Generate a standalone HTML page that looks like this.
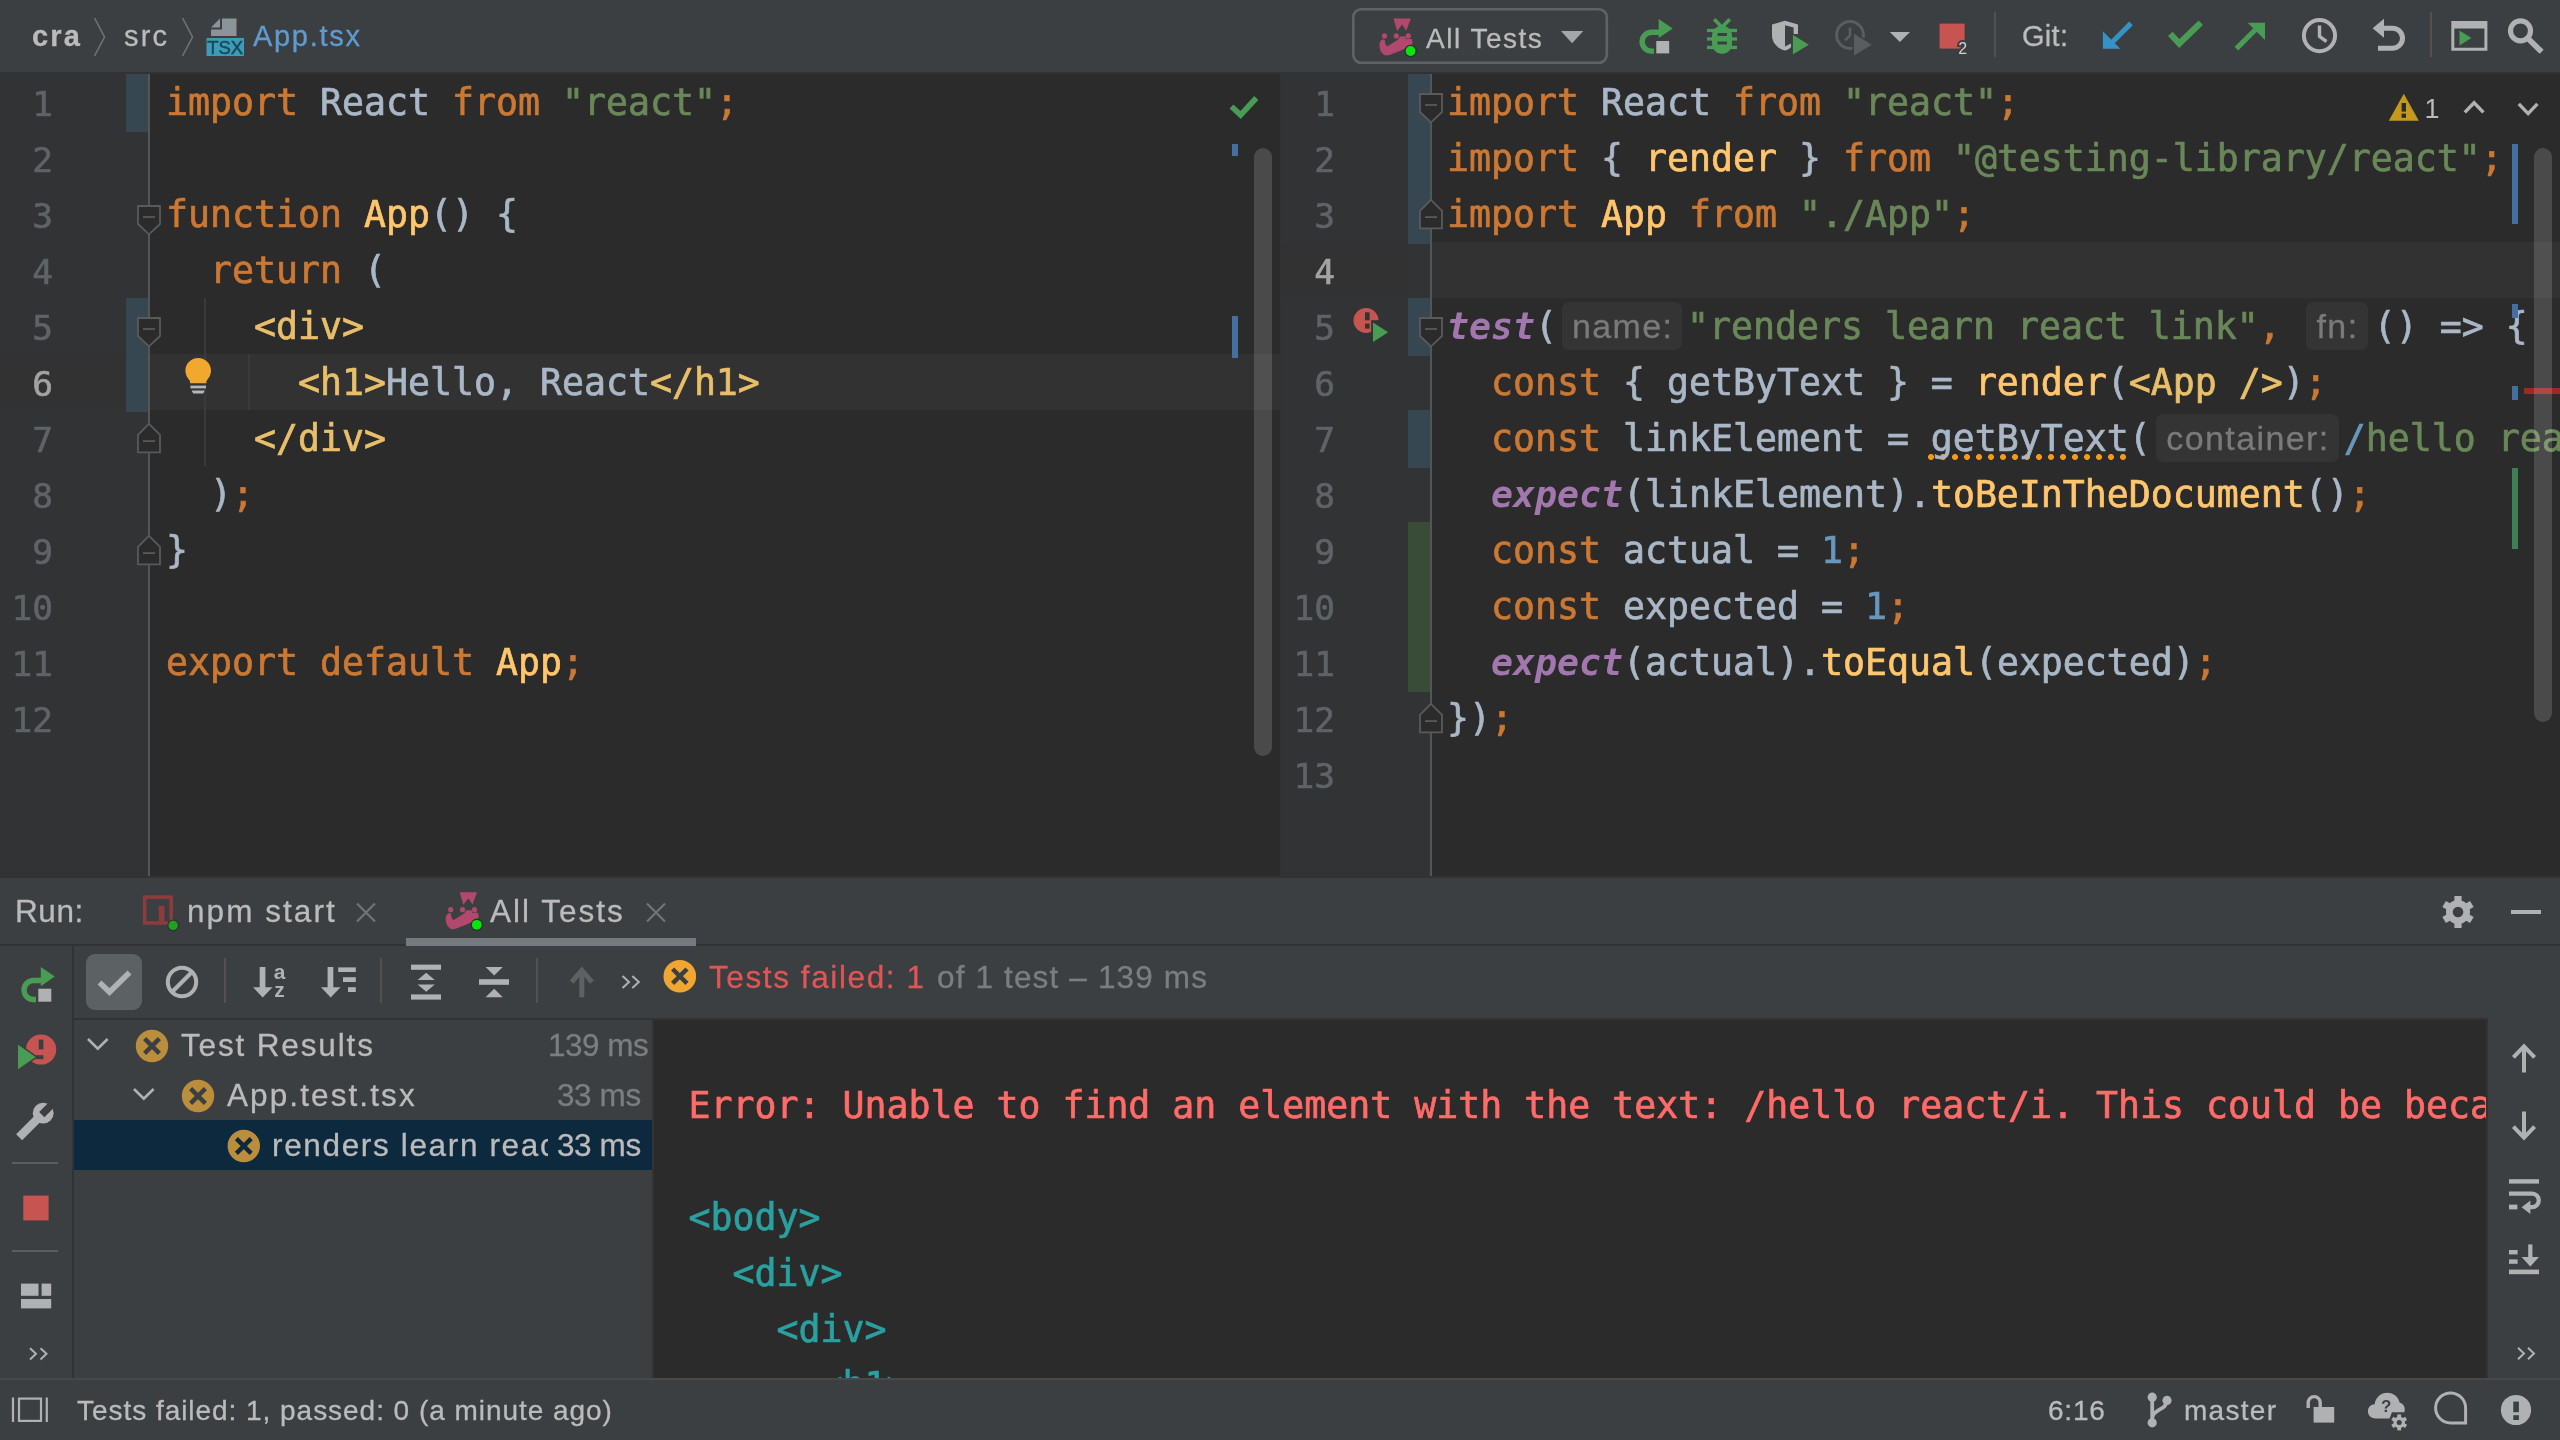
<!DOCTYPE html>
<html lang="en">
<head>
<meta charset="utf-8">
<title>cra – App.tsx</title>
<style>
*{box-sizing:border-box;margin:0;padding:0}
html,body{width:2560px;height:1440px;overflow:hidden;background:#3c3f41}
body{position:relative;font-family:"Liberation Sans","DejaVu Sans",sans-serif;color:#bbbbbb}
.abs{position:absolute}
svg text{font-family:"Liberation Sans","DejaVu Sans",sans-serif}
.ui,.ed,#con{will-change:transform}
.ui{position:absolute;white-space:nowrap;font-family:"Liberation Sans","DejaVu Sans",sans-serif;color:#bbbbbb;line-height:1;-webkit-text-stroke:0.3px currentColor}
.mono{font-family:"DejaVu Sans Mono","Liberation Mono",monospace}
/* ---------- editors ---------- */
.ed{position:absolute;top:74px;height:802px;background:#2b2b2b;overflow:hidden}
.gut{position:absolute;top:0;left:0;height:802px;background:#313335}
.gline{position:absolute;top:0;width:2px;height:802px;background:#555555}
.ln{position:absolute;left:0;width:53px;text-align:right;height:56px;line-height:56px;font-size:34.5px;color:#606366;font-family:"DejaVu Sans Mono","Liberation Mono",monospace;padding-top:2.3px;-webkit-text-stroke:0.6px currentColor}
.ln.cur{color:#a4a3a3}
#edR .ln{left:2px}
.cl{position:absolute;height:56px;line-height:56px;font-size:36.54px;white-space:pre;color:#a9b7c6;font-family:"DejaVu Sans Mono","Liberation Mono",monospace;padding-top:1px;-webkit-text-stroke:0.7px currentColor}
.k{color:#cc7832}.s{color:#6a8759}.f{color:#ffc66d}.t{color:#e8bf6a}.n{color:#6897bb}
.g{color:#a177ae;font-style:italic;font-weight:bold;-webkit-text-stroke:0}
.hl{position:absolute;height:56px;background:#323232}
.vb{position:absolute;width:22px;background:#374752}
.vg{position:absolute;width:22px;background:#384c38}
.ig{position:absolute;width:2px;background:#3a3a3a}
.hint{display:inline-block;vertical-align:top;height:48px;margin:3px 5px 0 5px;border-radius:7px;background:#343434;color:#7a7a7a;font-family:"Liberation Sans",sans-serif;font-size:34px;letter-spacing:1.4px;text-indent:1.4px;line-height:49px;text-align:center;-webkit-text-stroke:0.3px #7a7a7a}
.warnu{background-image:radial-gradient(circle,#f59a1f 1.9px,transparent 2.3px);background-size:8.8px 6px;background-repeat:repeat-x;background-position:2px 47px}
</style>
</head>
<body>
<!-- top toolbar -->
<div class="abs" id="topbar" style="left:0;top:0;width:2560px;height:72px;background:#3c3f41"></div>
<div class="ui" id="bc1" style="left:32px;top:22px;font-size:29px;font-weight:bold;color:#bbbbbb;letter-spacing:2.2px">cra</div>
<div class="ui" id="bc2" style="left:124px;top:22px;font-size:29px;letter-spacing:2.2px">src</div>
<div class="ui" id="bc3" style="left:253px;top:22px;font-size:29px;color:#5f9bd0;letter-spacing:1.7px">App.tsx</div>
<div class="ui" id="tb1" style="left:1426px;top:25px;font-size:28px;letter-spacing:1.5px">All Tests</div>
<div class="ui" id="tb2" style="left:2022px;top:22px;font-size:29px;letter-spacing:0.3px">Git:</div>
<div class="abs" style="left:1994px;top:12px;width:2px;height:45px;background:#515151"></div>
<div class="abs" style="left:2430px;top:12px;width:2px;height:45px;background:#515151"></div>
<div class="abs" style="left:0;top:72px;width:2560px;height:2px;background:#323232"></div>

<!-- LEFT EDITOR -->
<div class="ed" id="edL" style="left:0;width:1280px">
  <div class="gut" style="width:148px"></div>
  <div class="hl" style="left:150px;top:280px;width:1130px"></div>
  <div class="hl" style="left:0;top:280px;width:126px;background:#323232"></div>
  <div class="vb" style="left:126px;top:0;height:58px"></div>
  <div class="vb" style="left:126px;top:224px;height:114px"></div>
  <div class="gline" style="left:148px"></div>
  <div class="ig" style="left:204px;top:224px;height:168px"></div>
  <div class="ig" style="left:248px;top:280px;height:56px"></div>
  <div class="ln" style="top:0">1</div>
  <div class="ln" style="top:56px">2</div>
  <div class="ln" style="top:112px">3</div>
  <div class="ln" style="top:168px">4</div>
  <div class="ln" style="top:224px">5</div>
  <div class="ln cur" style="top:280px">6</div>
  <div class="ln" style="top:336px">7</div>
  <div class="ln" style="top:392px">8</div>
  <div class="ln" style="top:448px">9</div>
  <div class="ln" style="top:504px">10</div>
  <div class="ln" style="top:560px">11</div>
  <div class="ln" style="top:616px">12</div>
  <div class="cl" style="left:166px;top:0"><span class="k">import</span> React <span class="k">from</span> <span class="s">"react"</span><span class="k">;</span></div>
  <div class="cl" style="left:166px;top:112px"><span class="k">function</span> <span class="f">App</span>() {</div>
  <div class="cl" style="left:166px;top:168px">  <span class="k">return</span> (</div>
  <div class="cl" style="left:166px;top:224px">    <span class="t">&lt;div&gt;</span></div>
  <div class="cl" style="left:166px;top:280px">      <span class="t">&lt;h1&gt;</span>Hello, React<span class="t">&lt;/h1&gt;</span></div>
  <div class="cl" style="left:166px;top:336px">    <span class="t">&lt;/div&gt;</span></div>
  <div class="cl" style="left:166px;top:392px">  )<span class="k">;</span></div>
  <div class="cl" style="left:166px;top:448px">}</div>
  <div class="cl" style="left:166px;top:560px"><span class="k">export default</span> <span class="f">App</span><span class="k">;</span></div>
</div>

<!-- RIGHT EDITOR -->
<div class="ed" id="edR" style="left:1280px;width:1280px">
  <div class="gut" style="width:150px"></div>
  <div class="abs" style="left:0;top:0;width:2px;height:802px;background:#323232"></div>
  <div class="hl" style="left:152px;top:168px;width:1128px"></div>
  <div class="hl" style="left:0;top:168px;width:128px"></div>
  <div class="vb" style="left:128px;top:0;height:170px"></div>
  <div class="vb" style="left:128px;top:224px;height:58px"></div>
  <div class="vb" style="left:128px;top:336px;height:58px"></div>
  <div class="vg" style="left:128px;top:448px;height:170px"></div>
  <div class="gline" style="left:150px"></div>
  <div class="ln" style="top:0">1</div>
  <div class="ln" style="top:56px">2</div>
  <div class="ln" style="top:112px">3</div>
  <div class="ln cur" style="top:168px">4</div>
  <div class="ln" style="top:224px">5</div>
  <div class="ln" style="top:280px">6</div>
  <div class="ln" style="top:336px">7</div>
  <div class="ln" style="top:392px">8</div>
  <div class="ln" style="top:448px">9</div>
  <div class="ln" style="top:504px">10</div>
  <div class="ln" style="top:560px">11</div>
  <div class="ln" style="top:616px">12</div>
  <div class="ln" style="top:672px">13</div>
  <div class="cl" style="left:167px;top:0"><span class="k">import</span> React <span class="k">from</span> <span class="s">"react"</span><span class="k">;</span></div>
  <div class="cl" style="left:167px;top:56px"><span class="k">import</span> { <span class="f">render</span> } <span class="k">from</span> <span class="s">"@testing-library/react"</span><span class="k">;</span></div>
  <div class="cl" style="left:167px;top:112px"><span class="k">import</span> <span class="f">App</span> <span class="k">from</span> <span class="s">"./App"</span><span class="k">;</span></div>
  <div class="cl" style="left:167px;top:224px"><span class="g">test</span>(<span class="hint" style="width:120px">name:</span><span class="s">"renders learn react link"</span><span class="k">,</span> <span class="hint" style="width:62px;margin-left:3px;margin-right:6px">fn:</span>() =&gt; {</div>
  <div class="cl" style="left:167px;top:280px">  <span class="k">const</span> { getByText } = <span class="f">render</span>(<span class="t">&lt;App /&gt;</span>)<span class="k">;</span></div>
  <div class="abs" style="left:648.2px;top:380px;width:198px;height:6px;background-image:radial-gradient(circle at 3px 3px,#f59a11 2.7px,rgba(245,154,17,0) 3.2px);background-size:12px 6px"></div>
  <div class="cl" style="left:167px;top:336px">  <span class="k">const</span> linkElement = getByText(<span class="hint" style="width:183px">container:</span><span class="n">/</span><span class="s">hello react</span><span class="n">/i</span>)<span class="k">;</span></div>
  <div class="cl" style="left:167px;top:392px">  <span class="g">expect</span>(linkElement).<span class="f">toBeInTheDocument</span>()<span class="k">;</span></div>
  <div class="cl" style="left:167px;top:448px">  <span class="k">const</span> actual = <span class="n">1</span><span class="k">;</span></div>
  <div class="cl" style="left:167px;top:504px">  <span class="k">const</span> expected = <span class="n">1</span><span class="k">;</span></div>
  <div class="cl" style="left:167px;top:560px">  <span class="g">expect</span>(actual).<span class="f">toEqual</span>(expected)<span class="k">;</span></div>
  <div class="cl" style="left:167px;top:616px">})<span class="k">;</span></div>
</div>

<!-- BOTTOM PANEL -->
<div class="abs" style="left:0;top:876px;width:2560px;height:2px;background:#323232"></div>
<div class="abs" id="panel" style="left:0;top:878px;width:2560px;height:502px;background:#3c3f41"></div>
<!-- run header -->
<div class="ui" id="rh1" style="left:14.5px;top:896.0px;font-size:31.5px;letter-spacing:0.6px">Run:</div>
<div class="ui" id="rh2" style="left:187px;top:896.0px;font-size:31.5px;letter-spacing:2.05px">npm start</div>
<div class="ui" id="rh3" style="left:490px;top:896.0px;font-size:31.5px;letter-spacing:2.0px">All Tests</div>
<div class="abs" style="left:0;top:944px;width:2560px;height:2px;background:#323232"></div>
<div class="abs" style="left:406px;top:938px;width:290px;height:8px;background:#747a80"></div>
<!-- left tool column -->
<div class="abs" style="left:72px;top:946px;width:2px;height:432px;background:#323232"></div>
<div class="abs" style="left:12px;top:1162px;width:46px;height:2px;background:#5a5d5f"></div>
<div class="abs" style="left:12px;top:1250px;width:46px;height:2px;background:#5a5d5f"></div>
<!-- test toolbar -->
<div class="abs" style="left:86px;top:954px;width:56px;height:56px;border-radius:9px;background:#5c6164"></div>
<div class="abs" style="left:224px;top:958px;width:2px;height:45px;background:#515151"></div>
<div class="abs" style="left:380px;top:958px;width:2px;height:45px;background:#515151"></div>
<div class="abs" style="left:536px;top:958px;width:2px;height:45px;background:#515151"></div>
<div class="ui" id="tf1" style="left:709px;top:962.0px;font-size:31.5px;color:#e05555;letter-spacing:1.6px">Tests failed: 1</div>
<div class="ui" id="tf2" style="left:937px;top:962.0px;font-size:31.5px;color:#7b7e80;letter-spacing:1.15px">of 1 test – 139 ms</div>
<div class="abs" style="left:74px;top:1018px;width:2414px;height:2px;background:#323232"></div>
<div class="abs" style="left:2486px;top:1020px;width:2px;height:358px;background:#323232"></div>
<!-- tree -->
<div class="abs" style="left:74px;top:1120px;width:578px;height:50px;background:#0d293e"></div>
<div class="ui" id="tr1" style="left:181px;top:1030.0px;font-size:31.5px;letter-spacing:1.85px">Test Results</div>
<div class="ui" id="tr1t" style="left:548px;top:1029.8px;font-size:31.5px;color:#7b7e80;letter-spacing:-0.5px">139 ms</div>
<div class="ui" id="tr2" style="left:227px;top:1080.0px;font-size:31.5px;letter-spacing:2.1px">App.test.tsx</div>
<div class="ui" id="tr2t" style="left:557px;top:1079.8px;font-size:31.5px;color:#7b7e80;letter-spacing:-0.4px">33 ms</div>
<div class="ui" id="tr3" style="left:272px;top:1130.0px;font-size:31.5px;width:276px;overflow:hidden;height:40px;letter-spacing:1.65px">renders learn react link</div>
<div class="ui" id="tr3t" style="left:557px;top:1130.4px;font-size:31.5px;color:#bbbbbb;letter-spacing:-0.4px">33 ms</div>
<div class="abs" style="left:652px;top:1020px;width:2px;height:358px;background:#323232"></div>
<!-- console -->
<div class="abs" id="con" style="left:654px;top:1020px;width:1832px;height:358px;background:#2b2b2b;overflow:hidden">
  <div class="cl" style="left:34.5px;top:56.5px;color:#ff6b68">Error: Unable to find an element with the text: /hello react/i. This could be because the text is broken up by multiple elements.</div>
  <div class="cl" style="left:34.5px;top:168.5px;color:#2aa0a0">&lt;body&gt;</div>
  <div class="cl" style="left:34.5px;top:224.5px;color:#2aa0a0">  &lt;div&gt;</div>
  <div class="cl" style="left:34.5px;top:280.5px;color:#2aa0a0">    &lt;div&gt;</div>
  <div class="cl" style="left:34.5px;top:336.5px;color:#2aa0a0">      &lt;h1&gt;</div>
</div>
<!-- status bar -->
<div class="abs" style="left:0;top:1378px;width:2560px;height:2px;background:#484848"></div>
<div class="abs" style="left:0;top:1380px;width:2560px;height:60px;background:#3c3f41"></div>
<div class="ui" id="sb1" style="left:77px;top:1397.0px;font-size:28px;letter-spacing:0.96px">Tests failed: 1, passed: 0 (a minute ago)</div>
<div class="ui" id="sb2" style="left:2048px;top:1397.0px;font-size:28px;letter-spacing:0.8px">6:16</div>
<div class="ui" id="sb3" style="left:2184px;top:1397.0px;font-size:28px;letter-spacing:1.28px">master</div>

<!--SVG-START-->
<svg class="abs" style="left:0;top:0" width="2560" height="1440" viewBox="0 0 2560 1440" font-family="Liberation Sans, sans-serif">
<!-- ===== TOP TOOLBAR ===== -->
<g id="bc-icons" fill="none" stroke="#6e7377" stroke-width="1.6">
  <polyline points="94.5,18 104.5,37 94.5,56"/>
  <polyline points="182.5,18 192.5,37 182.5,56"/>
</g>
<g id="tsx-icon">
  <path d="M222,18.5 L236.5,18.5 L236.5,36 L211,36 L211,29.5 L222,29.5 Z" fill="#8b949b"/>
  <path d="M211,27.5 L220,18.5 L220,27.5 Z" fill="#8b949b"/>
  <rect x="206.5" y="38" width="37.5" height="18" fill="#3a9cb9"/>
  <text x="225.2" y="54.2" font-size="18.5" text-anchor="middle" fill="#1d4857" stroke="#1d4857" stroke-width="0.5" letter-spacing="0">TSX</text>
</g>
<rect id="runcfg" x="1353.3" y="9.2" width="253.5" height="53.6" rx="8" fill="none" stroke="#5e6366" stroke-width="2.6"/>
<g id="jest1">
  <path d="M1393.5,18.4 L1410.8,18.4 L1406.3,30.8 L1402.1,24.5 L1397.1,30.9 Z" fill="#b2486b"/>
  <circle cx="1384.5" cy="35.9" r="2.6" fill="#b2486b"/><circle cx="1396.3" cy="35.9" r="2.6" fill="#b2486b"/><circle cx="1408.3" cy="35.9" r="2.6" fill="#b2486b"/>
  <path d="M1382.1,39.4 C1379.8,41.2 1379.0,43.7 1379.6,46.2 C1379.8,49.7 1380.8,52.7 1384.8,55.2 C1387.8,55.8 1390.8,54.7 1393.8,53.2 C1397.3,51.7 1400.8,50.5 1403.8,49.2 C1406.8,48.0 1409.3,47.0 1410.5,45.9 C1411.8,44.7 1412.6,43.5 1412.5,42.2 L1411.8,38.9 L1405.8,38.9 L1405.6,36.5 L1400.1,36.4 L1398.5,38.9 C1397.3,40.2 1395.3,41.2 1393.8,42.2 C1392.1,43.4 1390.3,44.7 1388.8,45.5 C1388.1,46.0 1387.6,46.2 1387.1,46.2 C1386.3,45.7 1385.8,44.9 1385.5,43.9 C1385.0,42.6 1384.8,41.2 1384.8,39.9 L1383.8,39.4 Z" fill="#b2486b"/>
  <circle cx="1410.6" cy="51.0" r="6.2" fill="#2d2f30"/><circle cx="1410.6" cy="51.0" r="4.9" fill="#05e805"/>
</g>
<path d="M1561,31 L1583.3,31 L1572.1,43.2 Z" fill="#a4a6a8"/>
<g id="rerun1">
  <path d="M1659,32.3 L1651.5,32.3 A9.4,9.4 0 1 0 1651.5,51.1 L1654,51.1" fill="none" stroke="#499c54" stroke-width="5.4"/>
  <path d="M1658.7,19 L1672.7,28.5 L1658.7,38 Z" fill="#499c54"/>
  <rect x="1656.3" y="41" width="12.9" height="12.4" fill="#afb1b3"/>
</g>
<g id="bug" fill="#499c54">
  <rect x="1712" y="25.5" width="20" height="28.5" rx="10"/>
  <rect x="1707" y="28.8" width="30" height="3.3"/><rect x="1707" y="37.3" width="30" height="3.3"/><rect x="1707" y="45.8" width="30" height="3.3"/>
  <path d="M1714.2,19.2 L1722,27.2 M1729.8,19.2 L1722,27.2" stroke="#499c54" stroke-width="3.6" fill="none"/>
  <rect x="1717.5" y="33" width="9.5" height="3" fill="#3c3f41"/><rect x="1717.5" y="41.5" width="9.5" height="3" fill="#3c3f41"/>
</g>
<g id="cover">
  <path d="M1785,20.8 L1772,24.6 L1772,35 C1772,43 1777.5,48.5 1785,50.6 Z" fill="#afb1b3"/>
  <path d="M1785,20.8 L1798,24.6 L1798,34 L1793.6,34 L1793.6,27.6 L1785,25.2 Z" fill="#afb1b3"/>
  <path d="M1785,50.6 C1787.5,49.8 1789.5,48.6 1791,47.2 L1791,43.5 L1785,46.6 Z" fill="#afb1b3"/>
  <path d="M1792.3,33.8 L1810,44.7 L1792.3,55.6 Z" fill="#499c54" stroke="#3c3f41" stroke-width="1.2"/>
</g>
<g id="prof">
  <circle cx="1850" cy="35" r="13.4" fill="none" stroke="#5a5d5f" stroke-width="3"/>
  <path d="M1850,27.5 L1850,35.5 L1845,40.5" fill="none" stroke="#5a5d5f" stroke-width="2.6"/>
  <path d="M1854,33.8 L1871.8,44.7 L1854,55.6 Z" fill="#5a5d5f" stroke="#3c3f41" stroke-width="3"/>
  <path d="M1854,33.8 L1871.8,44.7 L1854,55.6 Z" fill="#5a5d5f"/>
</g>
<path d="M1889.8,32 L1910,32 L1899.9,42 Z" fill="#afb1b3"/>
<g id="stop1">
  <rect x="1939.6" y="23.6" width="25" height="25" fill="#c75450"/>
  <text x="1962.6" y="54" font-size="16" text-anchor="middle" fill="#d0d1d2" stroke="#3c3f41" stroke-width="4" paint-order="stroke">2</text>
</g>
<g id="git-update" fill="#3592c4">
  <path d="M2102.9,48.7 L2102.9,31.2 L2120.4,48.7 Z"/>
  <path d="M2129.2,21.6 L2132.8,25.2 L2113.5,44.5 L2109.9,40.9 Z"/>
</g>
<polyline points="2170.3,33.8 2179.3,43.6 2200.8,22.8" fill="none" stroke="#499c54" stroke-width="6.2"/>
<g id="git-push" fill="#499c54">
  <path d="M2265,22.7 L2265,40 L2247.7,22.7 Z"/>
  <path d="M2238.2,50.4 L2234.6,46.8 L2254,27.4 L2257.6,31 Z"/>
</g>
<g id="clock" fill="none" stroke="#afb1b3">
  <circle cx="2319.5" cy="35.6" r="15.6" stroke-width="4"/>
  <path d="M2319.5,25.5 L2319.5,36.5 L2326.5,41.5" stroke-width="3.4"/>
</g>
<g id="undo">
  <path d="M2383,28.2 L2392.5,28.2 A10,10 0 0 1 2392.5,48.2 L2378,48.2" fill="none" stroke="#afb1b3" stroke-width="5"/>
  <path d="M2372.6,28.2 L2384,18.7 L2384,37.7 Z" fill="#afb1b3"/>
</g>
<g id="runany">
  <path d="M2451.3,21 H2487.4 V50.8 H2451.3 Z M2454.3,28.6 V47.8 H2484.4 V28.6 Z" fill="#afb1b3" fill-rule="evenodd"/>
  <path d="M2459.5,30.6 L2471.4,38.1 L2459.5,45.6 Z" fill="#499c54"/>
</g>
<g id="search" fill="none" stroke="#afb1b3">
  <circle cx="2520.5" cy="30.8" r="10" stroke-width="5.2"/>
  <path d="M2528,38.5 L2541.6,51.8" stroke-width="5.8"/>
</g>
<!-- ===== EDITOR ICONS ===== -->
<g id="folds">
<path d="M138,206 H160 V224 L149,234.3 L138,224 Z" fill="#2b2b2b" stroke="#5a5a5a" stroke-width="1.8"/><path d="M143,217 H155" stroke="#5a5a5a" stroke-width="1.8"/>
<path d="M138,318 H160 V336 L149,346.3 L138,336 Z" fill="#2b2b2b" stroke="#5a5a5a" stroke-width="1.8"/><path d="M143,329 H155" stroke="#5a5a5a" stroke-width="1.8"/>
<path d="M149,423.8 L160,434.8 V452.40000000000003 H138 V434.8 Z" fill="#2b2b2b" stroke="#5a5a5a" stroke-width="1.8"/><path d="M143,441.1 H155" stroke="#5a5a5a" stroke-width="1.8"/>
<path d="M149,535.8 L160,546.8 V564.4 H138 V546.8 Z" fill="#2b2b2b" stroke="#5a5a5a" stroke-width="1.8"/><path d="M143,553.0999999999999 H155" stroke="#5a5a5a" stroke-width="1.8"/>
<path d="M1420,94 H1442 V112 L1431,122.3 L1420,112 Z" fill="#2b2b2b" stroke="#5a5a5a" stroke-width="1.8"/><path d="M1425,105 H1437" stroke="#5a5a5a" stroke-width="1.8"/>
<path d="M1431,199.8 L1442,210.8 V228.4 H1420 V210.8 Z" fill="#2b2b2b" stroke="#5a5a5a" stroke-width="1.8"/><path d="M1425,217.10000000000002 H1437" stroke="#5a5a5a" stroke-width="1.8"/>
<path d="M1420,318 H1442 V336 L1431,346.3 L1420,336 Z" fill="#2b2b2b" stroke="#5a5a5a" stroke-width="1.8"/><path d="M1425,329 H1437" stroke="#5a5a5a" stroke-width="1.8"/>
<path d="M1431,703.8 L1442,714.8 V732.4 H1420 V714.8 Z" fill="#2b2b2b" stroke="#5a5a5a" stroke-width="1.8"/><path d="M1425,721.0999999999999 H1437" stroke="#5a5a5a" stroke-width="1.8"/>
</g>
<g id="bulb">
  <path d="M198.2,358 C191,358 185.4,363.6 185.4,370.6 C185.4,375.4 188,378.6 190,381.2 L190,383.2 L206.4,383.2 L206.4,381.2 C208.4,378.6 211,375.4 211,370.6 C211,363.6 205.4,358 198.2,358 Z" fill="#f2a72e"/>
  <rect x="190.4" y="385.6" width="15.6" height="2.8" fill="#b4b6b8"/>
  <path d="M191.6,390.4 H204.8 L203.2,393.6 H193.2 Z" fill="#b4b6b8"/>
</g>
<polyline points="1231.5,106.5 1240.6,115 1256.3,98" fill="none" stroke="#499c54" stroke-width="5.6"/>
<rect x="1232" y="144" width="6" height="12" fill="#43709e"/>
<rect x="1232" y="316" width="6" height="42" fill="#43709e"/>
<rect x="1254" y="148" width="18" height="608" rx="9" fill="#ffffff" fill-opacity="0.15"/>
<!-- right editor stripe -->
<rect x="2512" y="144" width="6" height="80" fill="#43709e"/>
<rect x="2512" y="304" width="6" height="14" fill="#43709e"/>
<rect x="2512" y="386" width="6" height="14" fill="#43709e"/>
<rect x="2512" y="468" width="6" height="81" fill="#3f7f55"/>
<rect x="2524" y="388" width="36" height="6" fill="#9e2927"/>
<rect x="2534" y="148" width="18" height="574" rx="9" fill="#ffffff" fill-opacity="0.15"/>
<!-- run gutter icon -->
<g id="rungut">
  <circle cx="1366" cy="320.5" r="12.5" fill="#c75450"/>
  <rect x="1365" y="312.3" width="4.6" height="8" fill="#313335"/><rect x="1365" y="323.6" width="4.6" height="5" fill="#313335"/>
  <rect x="1371.2" y="320.2" width="9" height="14" fill="#313335"/>
  <path d="M1373,322.5 L1388.2,332.2 L1373,342 Z" fill="#499c54"/>
</g>
<!-- inspection widget -->
<g id="insp">
  <path d="M2403.8,93.8 L2418.8,120.8 L2388.8,120.8 Z" fill="#c59a1c"/>
  <rect x="2401.6" y="103" width="4.4" height="8.6" fill="#2b2b2b"/><rect x="2401.6" y="113.6" width="4.4" height="4.2" fill="#2b2b2b"/>
  <text x="2424.6" y="118" font-size="27" fill="#bbbbbb">1</text>
  <polyline points="2464.8,112.4 2474.1,102.8 2483.4,112.4" fill="none" stroke="#afb1b3" stroke-width="3.4"/>
  <polyline points="2518.8,103.8 2528.1,113.6 2537.4,103.8" fill="none" stroke="#afb1b3" stroke-width="3.4"/>
</g>
<!-- ===== RUN PANEL HEADER ===== -->
<g id="npm">
  <rect x="144.7" y="897.1" width="26.5" height="25.9" fill="none" stroke="#8e3b3b" stroke-width="3.6"/>
  <rect x="158.8" y="905.8" width="5.7" height="16" fill="#8e3b3b"/>
  <circle cx="173.2" cy="925.4" r="6" fill="#2f3133"/><circle cx="173.2" cy="925.4" r="4.7" fill="#21a121"/>
</g>
<g stroke="#6f7478" stroke-width="2.2" fill="none">
  <path d="M357,903.5 L375,921.5 M375,903.5 L357,921.5"/>
  <path d="M647,903.5 L665,921.5 M665,903.5 L647,921.5"/>
</g>
<g id="jest2">
  <path d="M459.7,892.2 L477.0,892.2 L472.5,904.6 L468.3,898.3 L463.3,904.7 Z" fill="#b2486b"/>
  <circle cx="450.7" cy="909.7" r="2.6" fill="#b2486b"/><circle cx="462.5" cy="909.7" r="2.6" fill="#b2486b"/><circle cx="474.5" cy="909.7" r="2.6" fill="#b2486b"/>
  <path d="M448.3,913.2 C446.0,915.0 445.2,917.5 445.8,920.0 C446.0,923.5 447.0,926.5 451.0,929.0 C454.0,929.6 457.0,928.5 460.0,927.0 C463.5,925.5 467.0,924.3 470.0,923.0 C473.0,921.8 475.5,920.8 476.7,919.7 C478.0,918.5 478.8,917.3 478.7,916.0 L478.0,912.7 L472.0,912.7 L471.8,910.3 L466.3,910.2 L464.7,912.7 C463.5,914.0 461.5,915.0 460.0,916.0 C458.3,917.2 456.5,918.5 455.0,919.3 C454.3,919.8 453.8,920.0 453.3,920.0 C452.5,919.5 452.0,918.7 451.7,917.7 C451.2,916.4 451.0,915.0 451.0,913.7 L450.0,913.2 Z" fill="#b2486b"/>
  <circle cx="476.8" cy="924.8" r="6.2" fill="#2d2f30"/><circle cx="476.8" cy="924.8" r="4.9" fill="#05e805"/>
</g>
<g id="gear" transform="translate(2458,912)" fill="#afb1b3">
  <g>
    <rect x="-3.6" y="-16" width="7.2" height="32"/>
    <rect x="-3.6" y="-16" width="7.2" height="32" transform="rotate(60)"/>
    <rect x="-3.6" y="-16" width="7.2" height="32" transform="rotate(120)"/>
  </g>
  <circle r="12"/>
  <circle r="5.3" fill="#3c3f41"/>
</g>
<rect x="2511" y="910" width="30" height="4" fill="#afb1b3"/>
<!-- ===== LEFT TOOL COLUMN ===== -->
<g id="rerun2">
  <path d="M41,980.5 L33.5,980.5 A9.5,9.5 0 1 0 33.5,999.5 L36,999.5" fill="none" stroke="#499c54" stroke-width="5.4"/>
  <path d="M40.8,967 L54.8,976.6 L40.8,986.2 Z" fill="#499c54"/>
  <rect x="38.3" y="988.7" width="13" height="13" fill="#afb1b3"/>
</g>
<g id="rerunfailed">
  <circle cx="41.1" cy="1049.5" r="15.1" fill="#c75450"/>
  <rect x="38.8" y="1039.6" width="4.6" height="9.8" fill="#3c3f41"/><rect x="36" y="1055.2" width="7.4" height="4" fill="#3c3f41"/>
  <path d="M18,1044.7 L35.6,1057 L18,1069.3 Z" fill="#499c54" stroke="#3c3f41" stroke-width="3"/>
  <path d="M18,1044.7 L35.6,1057 L18,1069.3 Z" fill="#499c54"/>
</g>
<g id="wrench" transform="rotate(-45 43.2 1113.2)">
  <rect x="9.2" y="1108.95" width="30" height="8.5" fill="#afb1b3"/>
  <circle cx="43.2" cy="1113.2" r="10.4" fill="#afb1b3"/>
  <rect x="41.2" y="1109.5" width="14" height="7.4" fill="#3c3f41"/>
</g>
<rect x="23.3" y="1195.6" width="25.3" height="24.8" fill="#c75450"/>
<g id="layout" fill="#afb1b3">
  <rect x="21" y="1283.6" width="17.5" height="12.2"/><rect x="41.6" y="1283.6" width="9.6" height="12.2"/><rect x="21" y="1299" width="30.2" height="9.4"/>
</g>
<g stroke="#afb1b3" stroke-width="2" fill="none">
  <polyline points="30,1348.2 36,1353.8 30,1359.4"/><polyline points="40.5,1348.2 46.5,1353.8 40.5,1359.4"/>
  <polyline points="2518,1347.8 2524,1353.5 2518,1359.2"/><polyline points="2528,1347.8 2534,1353.5 2528,1359.2"/>
  <polyline points="622.5,976 629,982 622.5,988"/><polyline points="632.3,976 638.8,982 632.3,988"/>
</g>
<!-- ===== TEST TOOLBAR ===== -->
<polyline points="99.5,982.5 109.5,992 129.5,972.5" fill="none" stroke="#afb1b3" stroke-width="5.6"/>
<g fill="none" stroke="#afb1b3" stroke-width="4">
  <circle cx="182" cy="982" r="14.2"/><path d="M172,992 L192,972"/>
</g>
<g id="sortalpha" fill="#afb1b3">
  <rect x="259.7" y="967" width="5.7" height="21"/><path d="M253,987.2 H272.5 L262.7,997.4 Z"/>
  <text x="279.6" y="979.4" font-size="21" font-weight="bold" text-anchor="middle">a</text>
  <text x="279.6" y="997.4" font-size="21" font-weight="bold" text-anchor="middle">z</text>
</g>
<g id="sortdur" fill="#afb1b3">
  <rect x="327.6" y="967" width="5.7" height="21"/><path d="M321,987.2 H340.5 L330.7,997.4 Z"/>
  <rect x="338.2" y="967.4" width="17.6" height="4.6"/><rect x="343" y="977.2" width="12.8" height="4.8"/><rect x="348" y="987.2" width="7.8" height="4.8"/>
</g>
<g id="expandall" fill="#afb1b3">
  <rect x="411" y="964.6" width="30" height="5.2"/><rect x="411" y="994.4" width="30" height="5.2"/>
  <path d="M426.2,972.8 L434.8,980 H417.6 Z"/><path d="M426.2,991.8 L434.8,984.4 H417.6 Z"/>
</g>
<g id="collapseall" fill="#afb1b3">
  <rect x="479" y="979.2" width="30" height="5.6"/>
  <path d="M485.6,967 H502.8 L494.2,975.6 Z"/><path d="M485.6,997.3 H502.8 L494.2,988.7 Z"/>
</g>
<g id="upoff" fill="none" stroke="#5e6062" stroke-width="5">
  <path d="M581.8,970 V997.3"/><polyline points="571.6,982.2 581.8,970.4 592,982.2"/>
</g>
<g id="failbig">
  <circle cx="679.8" cy="976.2" r="16.3" fill="#f0a732"/>
  <path d="M672.6,969 L687,983.4 M687,969 L672.6,983.4" stroke="#3c3f41" stroke-width="4.4"/>
</g>
<!-- ===== TREE ===== -->
<g fill="none" stroke="#afb1b3" stroke-width="2.6">
  <polyline points="88,1039 97.8,1048.6 107.6,1039"/>
  <polyline points="134,1089 143.8,1098.6 153.6,1089"/>
</g>
<g id="treeicons">
  <circle cx="152" cy="1046" r="16.2" fill="#ba8e3c"/><path d="M144.6,1038.6 L159.4,1053.4 M159.4,1038.6 L144.6,1053.4" stroke="#3c3f41" stroke-width="4.4"/>
  <circle cx="198" cy="1096" r="16.2" fill="#ba8e3c"/><path d="M190.6,1088.6 L205.4,1103.4 M205.4,1088.6 L190.6,1103.4" stroke="#3c3f41" stroke-width="4.4"/>
  <circle cx="243.8" cy="1146" r="16.2" fill="#ba8e3c"/><path d="M236.4,1138.6 L251.2,1153.4 M251.2,1138.6 L236.4,1153.4" stroke="#0d293e" stroke-width="4.4"/>
</g>
<!-- ===== CONSOLE RIGHT COLUMN ===== -->
<g fill="none" stroke="#afb1b3" stroke-width="4">
  <path d="M2524,1046.5 V1072.5"/><polyline points="2513.4,1057.4 2524,1046.4 2534.6,1057.4"/>
  <path d="M2524,1111.5 V1137.5"/><polyline points="2513.4,1126.6 2524,1137.6 2534.6,1126.6"/>
</g>
<g id="softwrap">
  <rect x="2509" y="1179.2" width="30" height="4.4" fill="#afb1b3"/>
  <path d="M2509,1193.6 H2532 A6.8,6.8 0 0 1 2532,1207.2 H2529" fill="none" stroke="#afb1b3" stroke-width="4.2"/>
  <path d="M2521.6,1207.2 L2530.4,1200.4 V1214 Z" fill="#afb1b3"/>
  <rect x="2509" y="1204.6" width="8.4" height="4.8" fill="#afb1b3"/>
</g>
<g id="scrollend" fill="#afb1b3">
  <rect x="2509" y="1269.6" width="30" height="4.6"/>
  <rect x="2509" y="1250" width="8.6" height="4.4"/><rect x="2509" y="1259.4" width="8.6" height="4.4"/>
  <rect x="2528.2" y="1244.4" width="4.2" height="14"/><path d="M2521.6,1257 H2539 L2530.3,1266.4 Z"/>
</g>
<!-- ===== STATUS BAR ===== -->
<g fill="none" stroke="#afb1b3" stroke-width="2.2">
  <path d="M13,1397.5 V1422"/><rect x="19" y="1398.6" width="22" height="22.3"/><path d="M46.8,1397.5 V1422"/>
</g>
<g id="branch">
  <circle cx="2152.2" cy="1397.2" r="4.6" fill="#afb1b3"/><circle cx="2152.2" cy="1422.8" r="4.6" fill="#afb1b3"/><circle cx="2167" cy="1400.4" r="4.6" fill="#afb1b3"/>
  <path d="M2152.2,1397 V1423 M2167,1400.4 C2167,1410 2153,1409 2152.4,1417.5" fill="none" stroke="#afb1b3" stroke-width="3.8"/>
</g>
<g id="lock">
  <rect x="2313.6" y="1407" width="20.6" height="15.6" fill="#afb1b3"/>
  <path d="M2308.2,1408 V1402.6 A6,6 0 0 1 2320.2,1402.6 V1408" fill="none" stroke="#afb1b3" stroke-width="3.4"/>
</g>
<g id="cloud">
  <path d="M2375.5,1418.4 C2370.8,1418.4 2367.9,1415 2367.9,1411.2 C2367.9,1407.2 2371,1404.4 2374.6,1404.2 C2375.6,1397.6 2380.8,1392.8 2387.4,1392.8 C2393.6,1392.8 2398.4,1397 2399.6,1402.6 C2402.8,1403.4 2404.8,1406 2404.8,1409.4 C2404.8,1410.4 2404.6,1411.4 2404.2,1412.2 L2392,1412.2 L2389.5,1418.4 Z" fill="#afb1b3"/>
  <text x="2386.2" y="1411.6" font-size="17" font-weight="bold" text-anchor="middle" fill="#3c3f41">?</text>
  <g transform="translate(2399.2,1422.4)" fill="#afb1b3">
    <circle r="8.6" fill="#3c3f41"/>
    <rect x="-1.9" y="-8" width="3.8" height="16"/><rect x="-1.9" y="-8" width="3.8" height="16" transform="rotate(60)"/><rect x="-1.9" y="-8" width="3.8" height="16" transform="rotate(120)"/>
    <circle r="5.8"/><circle r="2.5" fill="#3c3f41"/>
  </g>
</g>
<path d="M2465.6,1423 V1408.6 A15,15 0 1 0 2450.6,1423 Z" fill="none" stroke="#afb1b3" stroke-width="3"/>
<g id="notif">
  <circle cx="2516" cy="1410" r="15.1" fill="#afb1b3"/>
  <rect x="2513.3" y="1401.6" width="5.6" height="10.6" fill="#3c3f41"/><rect x="2513.3" y="1415.2" width="5.6" height="4.8" fill="#3c3f41"/>
</g>
</svg>
<!--SVG-END-->
</body>
</html>
